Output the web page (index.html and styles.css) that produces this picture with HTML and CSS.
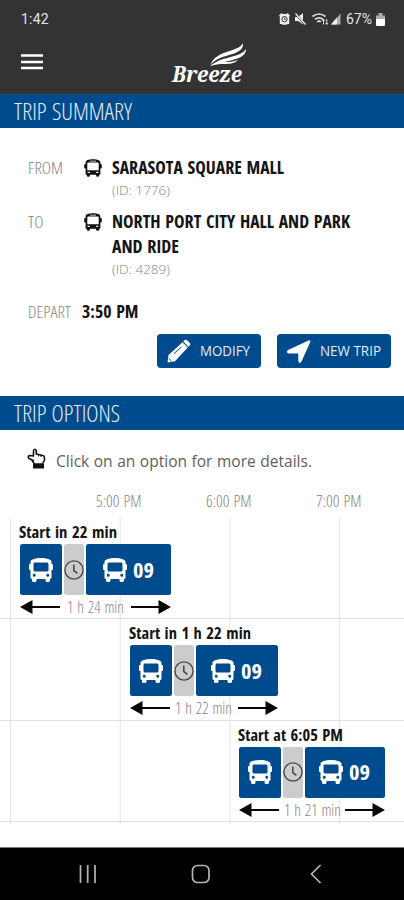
FILE: index.html
```
<!DOCTYPE html>
<html lang="en">
<head>
<meta charset="utf-8">
<title>Breeze Trip Planner</title>
<link rel="stylesheet" href="styles.css">
</head>
<body>
<svg class="defs" width="0" height="0">
  <symbol id="bus" viewBox="0 0 512 512"><path fill="currentColor" d="M488 128h-8V80c0-44.8-99.2-80-224-80S32 35.2 32 80v48h-8c-13.25 0-24 10.74-24 24v80c0 13.25 10.75 24 24 24h8v160c0 17.67 14.33 32 32 32v32c0 17.67 14.33 32 32 32h32c17.67 0 32-14.33 32-32v-32h192v32c0 17.67 14.33 32 32 32h32c17.67 0 32-14.33 32-32v-32h6.4c16 0 25.6-12.8 25.6-25.6V256h8c13.25 0 24-10.75 24-24v-80c0-13.26-10.75-24-24-24zM112 400c-17.67 0-32-14.33-32-32s14.33-32 32-32 32 14.33 32 32-14.33 32-32 32zm16-112c-17.67 0-32-14.33-32-32V128c0-17.67 14.33-32 32-32h256c17.67 0 32 14.33 32 32v128c0 17.67-14.33 32-32 32H128zm272 112c-17.67 0-32-14.33-32-32s14.33-32 32-32 32 14.33 32 32-14.33 32-32 32z"/></symbol>
  <symbol id="stop" viewBox="0 0 18 18"><path fill="currentColor" fill-rule="evenodd" d="M1.600 3.400C1.600 1.200 4.500.2 9 .2s7.400 1 7.400 3.200V5h.5q.9 0 .9 1v2.500q0 1-.9 1h-.5V15q0 .7-.8.7h-.4v1q0 1.100-1.200 1.100h-.7q-1.200 0-1.200-1.100v-1H5.900v1q0 1.100-1.200 1.100H4q-1.200 0-1.200-1.100v-1h-.4q-.8 0-.8-.7V9.500h-.5q-.9 0-.9-1V6q0-1 .9-1h.5zM3.300 4.500v6.800h11.400v-6.800Q14.700 3.600 13.800 3.600H4.200Q3.300 3.600 3.300 4.500zM6 1.700v.8h6v-.8zM3.600 12.700v1.400h2.200v-1.400zM12.200 12.700v1.400h2.200v-1.400z"/></symbol>
  <symbol id="clock" viewBox="0 0 22 22"><g fill="none" stroke="#474747" stroke-width="1.500"><circle cx="11" cy="11" r="10"/><path d="M10.800 5v6.600l4 3" stroke-width="1.700"/></g></symbol>
  <symbol id="arrow" viewBox="0 0 40 14"><path fill="#090909" d="M0 7 12.500 0v6H40v2H12.500v6z"/></symbol>
</svg>
<div class="app">
  <div class="status">
    <span class="clock-text">1:42</span>
    <svg class="status-icons" width="64" height="14" viewBox="0 0 64 14">
      <g fill="#eee">
        <path d="M1 3.500 3.500 1l1 1h4l1-1L12 3.500l-.8 1V12H9.500l-1 .8h-4L3.500 12H1.800V4.500z"/>
        <path d="M17 5h3l5-4v11.500L20 9h-3z"/>
        <path d="M53 12.500h9.500V1.500z" opacity=".65"/><path d="M53 12.500h6V5.500z"/>
      </g>
      <circle cx="6.500" cy="7.200" r="2.700" fill="none" stroke="#333"/><path d="M6.500 5.500v2h1.500" fill="none" stroke="#333" stroke-width=".8"/>
      <path d="m17 1 10 11.500" stroke="#333" stroke-width="2.200"/><path d="m17.500 1.500 10 11" stroke="#eee" stroke-width="1.300"/>
      <g fill="none" stroke="#ddd" stroke-width="1.700"><path d="M34.500 4.500q6.500-5 13 0M37 7.300q4-3 8 0M39.200 9.800q2-1.500 3.600 0"/><path d="M45.500 12.500V7.500M43.800 9l1.700-1.800L47.200 9M48.800 7v5M47.500 11l1.300 1.500L50 11" stroke-width="1"/></g>
    </svg>
    <span class="battery-text">67%</span>
    <svg class="battery" width="9" height="13" viewBox="0 0 9 13"><path fill="#aaa" d="M0 2.500h2.500V0h4v2.500H9V7H0z"/><path fill="#fff" d="M0 6h9v6q0 1-1 1H1q-1 0-1-1z"/></svg>
  </div>
  <header class="header">
    <svg class="menu" width="22" height="18" viewBox="0 0 22 18"><path d="M0 2.500h22M0 9h22M0 15h22" stroke="#fff" stroke-width="2.700"/></svg>
    <svg class="logo" width="78" height="44" viewBox="0 0 78 44">
      <text class="logo-text" x="1" y="39" textLength="70" lengthAdjust="spacingAndGlyphs">Breeze</text>
      <g fill="#fff"><path d="M72 0c1 7-6 10-17 13-8 2.200-12 5-16 9 4-8 10-11 18-13.500C66 5.500 70 4 72 0z"/><path d="M75 6c0 7-7 9.500-17 12-7 1.500-12 2-18 5 6-6 11-6.500 18-8.500C67 12 72 10.500 75 6z"/><path d="M67 16.800c-3 3.800-8 4.200-14 4.200-5 0-9 .3-14 2.200 5-4 9-4 14-4.100 5 0 10-.3 14-2.300z"/></g>
    </svg>
  </header>
  <h2 class="bar">
    <svg class="t" width="120" height="34"><text class="bar-text" x="1" y="26" textLength="118" lengthAdjust="spacingAndGlyphs">TRIP SUMMARY</text></svg>
  </h2>
  <section class="summary">
    <div class="place from">
      <span class="label"><svg width="38" height="24"><text class="thin" x="0" y="18" textLength="35" lengthAdjust="spacingAndGlyphs">FROM</text></svg></span>
      <svg class="stop" width="18" height="18"><use href="#stop"/></svg>
      <div class="info">
        <svg width="240" height="25"><text class="strong" x="0" y="18" textLength="172" lengthAdjust="spacingAndGlyphs">SARASOTA SQUARE MALL</text></svg>
        <svg width="80" height="18"><text class="ident" x="0" y="13.500" textLength="58" lengthAdjust="spacingAndGlyphs">(ID: 1776)</text></svg>
      </div>
    </div>
    <div class="place to">
      <span class="label"><svg width="38" height="24"><text class="thin" x="0" y="18" textLength="15.500" lengthAdjust="spacingAndGlyphs">TO</text></svg></span>
      <svg class="stop" width="18" height="18"><use href="#stop"/></svg>
      <div class="info">
        <svg width="245" height="25"><text class="strong" x="0" y="18" textLength="238" lengthAdjust="spacingAndGlyphs">NORTH PORT CITY HALL AND PARK</text></svg>
        <svg width="240" height="25"><text class="strong" x="0" y="18" textLength="67" lengthAdjust="spacingAndGlyphs">AND RIDE</text></svg>
        <svg width="80" height="18"><text class="ident" x="0" y="13.500" textLength="58" lengthAdjust="spacingAndGlyphs">(ID: 4289)</text></svg>
      </div>
    </div>
    <div class="depart">
      <svg width="54" height="24"><text class="thin" x="0" y="18" textLength="43" lengthAdjust="spacingAndGlyphs">DEPART</text></svg>
      <svg width="80" height="24"><text class="strong" x="0" y="18" textLength="56.500" lengthAdjust="spacingAndGlyphs">3:50 PM</text></svg>
    </div>
    <div class="buttons">
      <div class="button modify">
        <svg width="24" height="24" viewBox="0 0 24 24"><path fill="#fff" d="M.5 23.500 1.500 16 15.500 3.200l5.300 5.300L8 22.200zM16.300 2.500 17.800 1q1.200-.8 2.300.3l2.700 2.700q1.100 1.100.2 2.300l-1.500 1.500z"/><path d="m7 14.500 7.500-6.600M1.800 19.500l2.700 2.700" fill="none" stroke="#004b8d" stroke-width="1"/></svg>
        <svg width="52" height="20"><text class="button-text" x="0" y="15" textLength="50" lengthAdjust="spacingAndGlyphs">MODIFY</text></svg>
      </div>
      <div class="button new">
        <svg width="24" height="23" viewBox="0 0 24 23"><path fill="#fff" d="M1 10 21.500.4Q24-.3 23.300 2L14.500 21.500q-2.500 3-3.200-.5V13.500H2q-3.600-1-1-3.500z"/></svg>
        <svg width="62" height="20"><text class="button-text" x="0" y="15" textLength="61" lengthAdjust="spacingAndGlyphs">NEW TRIP</text></svg>
      </div>
    </div>
  </section>
  <h2 class="bar">
    <svg class="t" width="120" height="34"><text class="bar-text" x="1" y="26" textLength="106" lengthAdjust="spacingAndGlyphs">TRIP OPTIONS</text></svg>
  </h2>
  <div class="hint">
    <svg class="hand" width="19" height="21" viewBox="0 0 19 21"><path d="M7 13 2 10.500Q.2 8.500 2.500 7.500L6.500 8V2.500Q7.800 0 9.300 2.500V6l6.500 1.500q1.700.5 1.700 2.200V12l-2 4H7.500L5 12.500" fill="none" stroke="#111" stroke-width="1.600" stroke-linejoin="round"/><path d="M11.500 6.500v2M14 7v2" stroke="#111"/><path d="M6 16h11v4.500H6z" fill="#111"/></svg>
    <svg width="260" height="24"><text class="hint-text" x="0" y="17.500" textLength="256" lengthAdjust="spacingAndGlyphs">Click on an option for more details.</text></svg>
  </div>
  <div class="axis">
    <svg width="47" height="20"><text class="thin" x="0" y="15" textLength="45.500" lengthAdjust="spacingAndGlyphs">5:00 PM</text></svg>
    <svg width="47" height="20"><text class="thin" x="0" y="15" textLength="45.500" lengthAdjust="spacingAndGlyphs">6:00 PM</text></svg>
    <svg width="47" height="20"><text class="thin" x="0" y="15" textLength="45.500" lengthAdjust="spacingAndGlyphs">7:00 PM</text></svg>
  </div>
  <div class="chart">
    <div class="option first">
      <svg class="title" width="130" height="26"><text class="start" x="-1" y="20" textLength="98" lengthAdjust="spacingAndGlyphs">Start in 22 min</text></svg>
      <div class="legs"><div class="leg"><svg width="24" height="24"><use href="#bus"/></svg></div><div class="wait"><svg width="20" height="22"><use href="#clock"/></svg></div><div class="leg ride"><svg width="24" height="24"><use href="#bus"/></svg><svg width="22" height="24"><text class="route" x="0" y="19.500" textLength="21" lengthAdjust="spacingAndGlyphs">09</text></svg></div></div>
      <div class="span"><svg width="40" height="14"><use href="#arrow"/></svg><svg width="57" height="20"><text class="thin" x="0" y="15.500" textLength="57" lengthAdjust="spacingAndGlyphs">1 h 24 min</text></svg><svg class="right" width="40" height="14"><use href="#arrow"/></svg></div>
    </div>
    <div class="option second">
      <svg class="title" width="130" height="26"><text class="start" x="-1" y="20" textLength="122" lengthAdjust="spacingAndGlyphs">Start in 1 h 22 min</text></svg>
      <div class="legs"><div class="leg"><svg width="24" height="24"><use href="#bus"/></svg></div><div class="wait"><svg width="20" height="22"><use href="#clock"/></svg></div><div class="leg ride"><svg width="24" height="24"><use href="#bus"/></svg><svg width="22" height="24"><text class="route" x="0" y="19.500" textLength="21" lengthAdjust="spacingAndGlyphs">09</text></svg></div></div>
      <div class="span"><svg width="40" height="14"><use href="#arrow"/></svg><svg width="57" height="20"><text class="thin" x="0" y="15.500" textLength="57" lengthAdjust="spacingAndGlyphs">1 h 22 min</text></svg><svg class="right" width="40" height="14"><use href="#arrow"/></svg></div>
    </div>
    <div class="option third">
      <svg class="title" width="130" height="26"><text class="start" x="-1" y="20" textLength="105" lengthAdjust="spacingAndGlyphs">Start at 6:05 PM</text></svg>
      <div class="legs"><div class="leg"><svg width="24" height="24"><use href="#bus"/></svg></div><div class="wait"><svg width="20" height="22"><use href="#clock"/></svg></div><div class="leg ride"><svg width="24" height="24"><use href="#bus"/></svg><svg width="22" height="24"><text class="route" x="0" y="19.500" textLength="21" lengthAdjust="spacingAndGlyphs">09</text></svg></div></div>
      <div class="span"><svg width="40" height="14"><use href="#arrow"/></svg><svg width="57" height="20"><text class="thin" x="0" y="15.500" textLength="57" lengthAdjust="spacingAndGlyphs">1 h 21 min</text></svg><svg class="right" width="40" height="14"><use href="#arrow"/></svg></div>
    </div>
  </div>
  <nav class="nav">
    <svg width="18" height="18" viewBox="0 0 18 18"><path d="M1.500 0v18M8.700 0v18M16 0v18" stroke="#b5b5b5" stroke-width="1.700"/></svg>
    <svg width="20" height="20" viewBox="0 0 20 20"><rect x="1.500" y="1.500" width="16.500" height="17" rx="5" fill="none" stroke="#b5b5b5" stroke-width="1.700"/></svg>
    <svg width="12" height="20" viewBox="0 0 12 20"><path d="M10.500 1 1.500 10l9 9" fill="none" stroke="#b5b5b5" stroke-width="1.700"/></svg>
  </nav>
</div>
</body>
</html>
```
FILE: styles.css
```
* { box-sizing: border-box; }
body { margin: 0; background: #fff; font-family: "Open Sans", sans-serif; font-stretch: 75%; }
svg { display: block; flex: none; overflow: visible; }
.defs { display: none; }
.app { width: 404px; height: 900px; display: flex; flex-direction: column; overflow: hidden; }
.status { height: 38px; flex: none; background: #333; color: #e4e4e4; display: flex; align-items: center; padding: 0 19px 0 21px; font: 400 14px Roboto, sans-serif; }
.clock-text { flex: 1; letter-spacing: 0.2px; }
.battery-text { margin-left: 4px; width: 30px; }
.header { height: 56px; flex: none; background: #333; display: flex; align-items: flex-start; padding-left: 21px; }
.menu { margin-top: 15px; }
.logo { margin: 5px 0 0 128px; }
.logo-text { font: italic 700 22px "Noto Serif", "DejaVu Serif Condensed", "Liberation Serif", serif; fill: #fff; }
.bar { margin: 0; height: 34px; flex: none; background: #004b8d; padding-left: 13px; }
.bar-text { font-size: 23.500px; font-weight: 300; fill: #e4ebf5; word-spacing: 1px; }
.summary { height: 268px; flex: none; padding: 28px 0 0 28px; }
.place { display: flex; align-items: flex-start; }
.from { height: 54px; }
.to { height: 90px; }
.label { width: 56px; }
.stop { margin: 3px 10px 0 0; color: #111; }
.thin { font-size: 17px; font-weight: 300; fill: #858585; word-spacing: 1px; }
.strong { font-size: 17.500px; font-weight: 700; fill: #151515; word-spacing: 1.500px; }
.ident { font-size: 13px; font-weight: 300; font-stretch: 100%; fill: #858585; }
.depart { display: flex; height: 34px; }
.buttons { display: flex; gap: 16px; padding-left: 129px; }
.button { height: 34px; background: #004b8d; border-radius: 4px; display: flex; align-items: center; padding-left: 10px; gap: 9px; }
.modify { width: 104px; }
.new { width: 114px; }
.button-text { font-size: 14px; font-weight: 400; font-stretch: 100%; fill: #e6edf5; }
.hint { height: 62px; flex: none; display: flex; align-items: center; padding-left: 27px; gap: 10px; }
.hand { margin-top: -5px; }
.hint-text { font-size: 16px; font-stretch: 100%; fill: #606060; word-spacing: 0.500px; }
.axis { height: 26px; flex: none; display: flex; gap: 63px; padding-left: 96px; }
.chart { height: 306px; flex: none; background: linear-gradient(90deg, #e4e4e4 1px, transparent 1px) 10px 0 / 109.700px 100%; }
.option { height: 101.300px; border-bottom: 1px solid #e0e0e0; }
.first { padding-left: 20px; }
.second { padding-left: 129.500px; }
.third { padding-left: 239px; }
.legs { display: flex; gap: 2px; height: 51px; }
.leg, .wait { display: flex; align-items: center; justify-content: center; border-radius: 2.500px; }
.leg { width: 42px; background: #004b8d; color: #fff; gap: 6px; }
.wait { width: 20px; background: #ccc; }
.first .ride { width: 85px; }
.second .ride { width: 82px; }
.third .ride { width: 80px; }
.first .span { width: 151px; }
.second .span { width: 148px; }
.third .span { width: 146px; }
.span { display: flex; justify-content: space-between; align-items: center; height: 24px; }
.right { transform: scaleX(-1); }
.start { font-size: 16.500px; font-weight: 700; fill: #151515; word-spacing: 1.500px; }
.route { font-size: 21px; font-weight: 700; fill: #fff; }
.nav { height: 53px; flex: none; background: #000; display: flex; align-items: center; padding: 0 0 0 79px; margin-top: auto; border-top: 1px solid #777; }
.nav svg + svg { margin-left: 94px; }
.nav svg:last-child { margin-left: 99px; }
```
